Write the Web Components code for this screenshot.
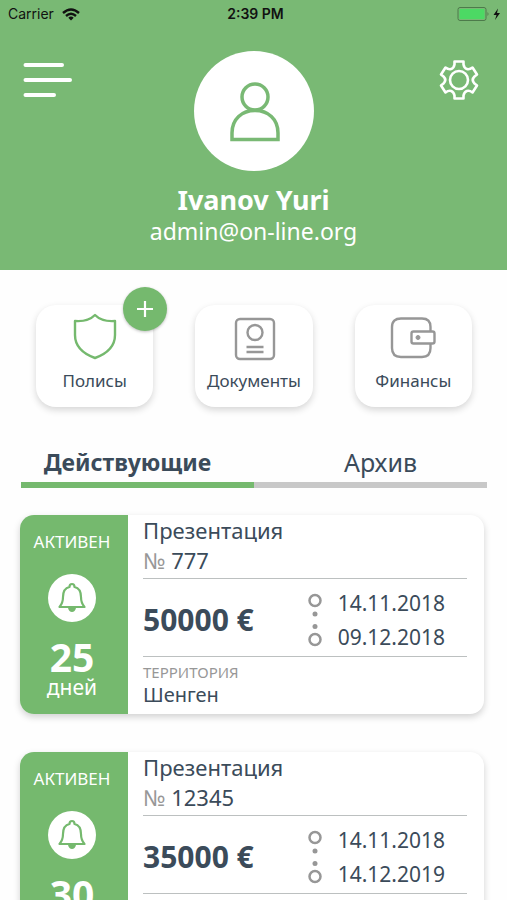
<!DOCTYPE html>
<html lang="ru">
<head>
<meta charset="utf-8">
<meta name="viewport" content="width=device-width, initial-scale=1">
<title>Полисы</title>
<style>
  html { --green: #79b974; --leaf: #75b96e; --ink: #3b4b5a; --grey: #979797; scrollbar-width: none; }
  body { margin: 0; background: #fefefe; color: var(--ink); font-family: "Noto Sans", "Open Sans", sans-serif; }
</style>
</head>
<body>
<policy-app></policy-app>
<script>
  const define = (name, html) => customElements.define(name, class extends HTMLElement {
    constructor() {
      super();
      const t = document.createElement('template');
      t.innerHTML = '<style>*{box-sizing:border-box}button{font:inherit;color:inherit;background:none;border:0;padding:0;margin:0;cursor:pointer}svg{display:block}</style>' + html;
      this.attachShadow({ mode: 'open' }).append(t.content.cloneNode(true));
    }
  });

  define('status-bar', `
    <style>
      :host { display: grid; grid-template-columns: 1fr auto 1fr; align-items: center; height: 28px; padding: 0 4px 0 8px; color: #111; font: 14px/28px Inter, "Liberation Sans", sans-serif; }
      div { display: flex; align-items: center; gap: 8px; }
      .right { justify-content: flex-end; gap: 0; }
      .time { font-weight: 600; }
    </style>
    <div><span>Carrier</span>
      <svg width="18" height="13" viewBox="0 0 18 13" fill="none" stroke="#111" stroke-width="2.4"><path d="M1 5Q9-2 17 5"/><path d="M4 8Q9 3.600 14 8"/><path d="M6.300 9.700Q9 7.500 11.700 9.700L9 12.500z" fill="#111" stroke="none"/></svg></div>
    <span class="time">2:39 PM</span>
    <div class="right"><svg width="46" height="16" viewBox="0 0 46 16"><rect x="1" y="1.500" width="28" height="13" rx="2" fill="none" stroke="#4d7a4b"/><rect x="2.500" y="3" width="25" height="10" rx="1" fill="#4cd964"/><path d="M30.500 6q2 2 0 4z" fill="#4d7a4b"/><path d="M41 2.500L36.500 9h3L38 14l5-7h-3z" fill="#111"/></svg></div>`);

  define('profile-header', `
    <style>
      :host { display: block; background: var(--green); color: #fff; padding-bottom: 24px; }
      .row { display: grid; grid-template-columns: 1fr auto 1fr; padding: 23px 23px 0; align-items: start; }
      .menu { justify-self: start; margin-top: 10px; }
      .gear { justify-self: end; margin: 8px 5px 0 0; }
      .avatar { width: 120px; height: 120px; border-radius: 50%; background: #fff; display: grid; place-items: center; }
      .id { text-align: center; padding-top: 13px; }
      h1 { margin: 0; font-size: 27px; line-height: 32px; font-weight: 700; }
      a { display: block; color: inherit; text-decoration: none; font-size: 23px; line-height: 30px; }
    </style>
    <status-bar></status-bar>
    <div class="row">
      <button class="menu" aria-label="Меню"><svg width="50" height="38" viewBox="0 0 50 38" stroke="#fff" stroke-width="4" stroke-linecap="round"><path d="M2.500 4H39M2.500 19H47M2.500 34H31"/></svg></button>
      <div class="avatar"><svg width="52" height="62" viewBox="0 0 52 62" fill="none" stroke="#79b974" stroke-width="3.500"><circle cx="27" cy="17" r="13"/><path d="M4 59.500V53C4 39 14 30.500 27 30.500S50 39 50 53V59.500Z"/></svg></div>
      <button class="gear" aria-label="Настройки"><svg width="40" height="42" viewBox="-20 -21 40 42" fill="none" stroke="#fff" stroke-width="2.600" stroke-linejoin="round"><circle r="9"/><path d="M-4.500-18.500H4.500V-15.500C5.500-10.500 9.500-9.500 13.500-12.500L18-5.500L15.500-3.500C13-1 13 1 15.500 3.500L18 5.500L13.500 12.500C9.500 9.500 5.500 10.500 4.500 15.500V18.500H-4.500V15.500C-5.500 10.500-9.500 9.500-13.500 12.500L-18 5.500L-15.500 3.500C-13 1-13-1-15.500-3.500L-18-5.500L-13.500-12.500C-9.500-9.500-5.500-10.500-4.500-15.500Z"/></svg></button>
    </div>
    <div class="id"><h1>Ivanov Yuri</h1><a href="mailto:admin@on-line.org">admin@on-line.org</a></div>`);

  define('nav-tile', `
    <style>
      :host { display: block; position: relative; }
      .tile { width: 100%; height: 102px; border-radius: 20px; background: #fff; box-shadow: 0 3px 7px rgba(0,0,0,.16); display: flex; flex-direction: column; align-items: center; padding-top: 6px; font-size: 17px; line-height: 32px; white-space: nowrap; }
      ::slotted(svg) { display: block; width: 48px; height: 54px; }
      ::slotted([slot=badge]) { position: absolute; top: -18px; right: -14px; }
    </style>
    <button class="tile"><slot name="icon"></slot><span><slot></slot></span></button><slot name="badge"></slot>`);

  define('add-button', `
    <style>
      :host { display: block; }
      button { display: grid; place-items: center; width: 44px; height: 44px; border-radius: 50%; background: var(--leaf); box-shadow: 0 1px 3px rgba(0,0,0,.25); }
    </style>
    <button aria-label="Добавить полис"><svg width="16" height="16" viewBox="0 0 16 16" stroke="#fff" stroke-width="2.200"><path d="M8 0V16M0 8H16"/></svg></button>`);

  define('nav-tiles', `
    <style>:host { display: grid; grid-template-columns: repeat(3, minmax(0, 1fr)); gap: 42px; padding: 35px 35px 0 36px; }</style>
    <nav-tile>
      <svg slot="icon" viewBox="0 0 48 54" fill="none" stroke="#75b96e" stroke-width="2.400" stroke-linejoin="round"><path d="M24 4Q17 11 4 10V24C4 36 13 43 24 47C35 43 44 36 44 24V10Q31 11 24 4Z"/></svg>
      Полисы<add-button slot="badge"></add-button>
    </nav-tile>
    <nav-tile>
      <svg slot="icon" viewBox="0 0 48 54" fill="none" stroke="#979797" stroke-width="2.400"><rect x="6" y="8" width="38" height="40" rx="4"/><circle cx="25" cy="21.500" r="7.500"/><path d="M16.500 36H33.500M16.500 41H33.500"/></svg>
      Документы
    </nav-tile>
    <nav-tile>
      <svg slot="icon" viewBox="0 0 48 54" fill="none" stroke="#979797" stroke-width="2.400"><path d="M41.500 20V16Q41.500 7.500 33 7.500H12Q3 7.500 3 16V37Q3 46 12 46H33Q41.500 46 41.500 37V33"/><rect x="22.500" y="20.500" width="23" height="12" rx="2"/><circle cx="29" cy="26.500" r="2" fill="#979797" stroke-width="1"/></svg>
      Финансы
    </nav-tile>`);

  define('policy-tabs', `
    <style>
      :host { display: block; padding: 35px 20px 0 21px; }
      div { display: grid; grid-template-columns: 1fr 1fr; }
      button { font-size: 23px; line-height: 40px; border-bottom: 6px solid #c8c8c8; white-space: nowrap; padding-left: 20px; }
      button[aria-selected=true] { font-weight: 700; border-color: var(--leaf); padding: 0 20px 0 0; }
      button[aria-selected=false] { font-size: 25px; }
    </style>
    <div role="tablist"><button role="tab" aria-selected="true">Действующие</button><button role="tab" aria-selected="false">Архив</button></div>`);

  define('policy-card', `
    <style>
      :host { display: grid; grid-template-columns: 108px minmax(0, 1fr); border-radius: 14px; overflow: hidden; background: #fff; box-shadow: 0 3px 7px rgba(0,0,0,.18); }
      .side { background: var(--leaf); color: #fff; display: flex; flex-direction: column; align-items: center; padding: 15px 4px 0 0; }
      .state { font-size: 17px; line-height: 24px; }
      .bell { width: 48px; height: 48px; border-radius: 50%; background: #fff; display: grid; place-items: center; margin: 20px 0 15px 0; }
      .days { font-size: 39px; line-height: 40px; font-weight: 700; }
      .unit { font-size: 21px; line-height: 20px; }
      .body { padding: 0 17px 6px 15px; }
      h2 { margin: 0; font-size: 22px; line-height: 30px; font-weight: 400; }
      .no { margin: 0 0 3px; font-size: 22px; line-height: 30px; }
      i { font-style: normal; color: var(--grey); }
      .mid { display: flex; align-items: center; justify-content: space-between; height: 79px; border: 1px solid #bcc0c0; border-width: 1px 0; padding-top: 4px; }
      .sum { font-size: 30px; font-weight: 700; white-space: nowrap; }
      .period { display: flex; align-items: center; gap: 16px; padding-right: 22px; font-size: 21px; line-height: 34px; }
      .label { color: var(--grey); font-size: 15px; line-height: 20px; padding-top: 5px; }
      .place { font-size: 20px; line-height: 26px; }
      ::slotted(*) { display: block; }
    </style>
    <div class="side">
      <span class="state">АКТИВЕН</span>
      <button class="bell" aria-label="Напоминание"><svg width="28" height="32" viewBox="0 0 28 32" fill="none" stroke="#75b96e" stroke-width="2.200" stroke-linejoin="round"><path d="M11.500 5Q11.500 2 14 2T16.500 5C21 6 23 10 23 15Q23 21 26.500 25H1.500Q5 21 5 15C5 10 7 6 11.500 5Z"/><path d="M10 26H18Q17 30 14 30T10 26Z" fill="#75b96e" stroke="none"/></svg></button>
      <span class="days"><slot name="days"></slot></span><span class="unit">дней</span>
    </div>
    <div class="body">
      <h2>Презентация</h2>
      <p class="no"><i>№</i> <slot></slot></p>
      <div class="mid">
        <span class="sum"><slot name="sum"></slot></span>
        <div class="period">
          <svg width="14" height="54" viewBox="0 0 14 54" fill="none" stroke="#979797" stroke-width="2.500"><circle cx="7" cy="7.500" r="5.500"/><circle cx="7" cy="46.500" r="5.500"/><g fill="#979797" stroke="none"><circle cx="7" cy="21" r="2.500"/><circle cx="7" cy="33.500" r="2.500"/></g></svg>
          <div><slot name="from"></slot><slot name="to"></slot></div>
        </div>
      </div>
      <div class="label">ТЕРРИТОРИЯ</div>
      <div class="place">Шенген</div>
    </div>`);

  define('policy-app', `
    <style>
      :host { display: block; height: 100vh; overflow: hidden; }
      .list { display: grid; gap: 38px; padding: 27px 23px 38px 20px; }
    </style>
    <header><profile-header></profile-header></header>
    <nav><nav-tiles></nav-tiles></nav>
    <main>
      <policy-tabs></policy-tabs>
      <div class="list">
        <policy-card>777<span slot="days">25</span><span slot="sum">50000 €</span><time slot="from">14.11.2018</time><time slot="to">09.12.2018</time></policy-card>
        <policy-card>12345<span slot="days">30</span><span slot="sum">35000 €</span><time slot="from">14.11.2018</time><time slot="to">14.12.2019</time></policy-card>
      </div>
    </main>`);
</script>
</body>
</html>
